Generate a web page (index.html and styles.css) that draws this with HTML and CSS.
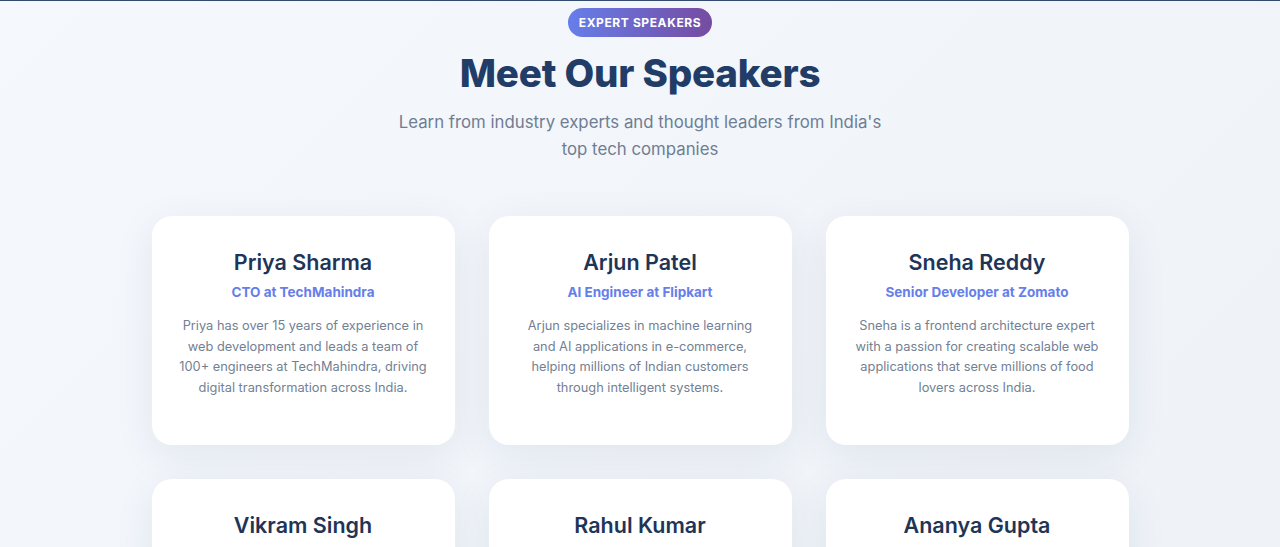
FILE: index.html
```html
<!DOCTYPE html>
<html lang="en">
<head>
<meta charset="utf-8">
<title>Meet Our Speakers</title>
<link rel="stylesheet" href="styles.css">
</head>
<body>
<section class="speakers">
  <div class="intro">
    <span class="badge">EXPERT SPEAKERS</span>
    <h1 class="title">Meet Our Speakers</h1>
    <p class="subtitle">Learn from industry experts and thought leaders from India's top tech companies</p>
  </div>
  <div class="grid">
    <article class="card">
      <h3 class="name">Priya Sharma</h3>
      <p class="role">CTO at TechMahindra</p>
      <p class="bio">Priya has over 15 years of experience in web development and leads a team of 100+ engineers at TechMahindra, driving digital transformation across India.</p>
    </article>
    <article class="card">
      <h3 class="name">Arjun Patel</h3>
      <p class="role">AI Engineer at Flipkart</p>
      <p class="bio">Arjun specializes in machine learning and AI applications in e-commerce, helping millions of Indian customers through intelligent systems.</p>
    </article>
    <article class="card">
      <h3 class="name">Sneha Reddy</h3>
      <p class="role">Senior Developer at Zomato</p>
      <p class="bio">Sneha is a frontend architecture expert with a passion for creating scalable web applications that serve millions of food lovers across India.</p>
    </article>
    <article class="card">
      <h3 class="name">Vikram Singh</h3>
      <p class="role">Cloud Architect at Infosys</p>
      <p class="bio">Vikram designs cloud infrastructure for enterprise clients across India.</p>
    </article>
    <article class="card">
      <h3 class="name">Rahul Kumar</h3>
      <p class="role">DevOps Lead at Paytm</p>
      <p class="bio">Rahul builds reliable deployment pipelines for high-traffic payment systems.</p>
    </article>
    <article class="card">
      <h3 class="name">Ananya Gupta</h3>
      <p class="role">Product Designer at Swiggy</p>
      <p class="bio">Ananya crafts delightful user experiences for millions of users.</p>
    </article>
  </div>
</section>
</body>
</html>
```

FILE: styles.css
```css
html, body {
  margin: 0;
  padding: 0;
}
body {
  font-family: "Inter", "Liberation Sans", sans-serif;
  background: linear-gradient(135deg, #f5f8fd 0%, #eef2f7 100%);
  border-top: 1px solid #34496e;
  min-height: 100vh;
}
.speakers {
  padding: 7px 0 60px;
}
.intro {
  display: flex;
  flex-direction: column;
  align-items: center;
  text-align: center;
}
.badge {
  display: inline-block;
  background: linear-gradient(90deg, #667eea 0%, #764ba2 100%);
  color: #ffffff;
  font-size: 12px;
  font-weight: 700;
  letter-spacing: 0.6px;
  line-height: 29px;
  height: 29px;
  padding: 0 11px;
  border-radius: 15px;
}
.title {
  margin: 12px 0 0;
  font-family: "Inter", "Liberation Sans", sans-serif;
  font-size: 38.5px;
  font-weight: 800;
  line-height: 48px;
  letter-spacing: -0.2px;
  color: #213c66;
}
.subtitle {
  margin: 12px 0 0;
  max-width: 500px;
  font-size: 16.8px;
  line-height: 27px;
  color: #6f7d93;
}
.grid {
  display: grid;
  grid-template-columns: repeat(3, 303px);
  gap: 34px 34px;
  justify-content: center;
  margin-top: 53px;
}
.card {
  background: #ffffff;
  border-radius: 20px;
  padding: 32px 27px 47px;
  text-align: center;
  box-shadow: 0 10px 40px rgba(30, 50, 90, 0.08);
}
.name {
  margin: 0;
  font-family: "Inter", "Liberation Sans", sans-serif;
  font-size: 21.5px;
  font-weight: 600;
  line-height: 28px;
  color: #1e3557;
}
.role {
  margin: 6px 0 0;
  font-size: 13.5px;
  font-weight: 700;
  line-height: 20px;
  color: #667eea;
}
.bio {
  margin: 14px 0 0;
  font-size: 12.8px;
  line-height: 20.5px;
  color: #727f94;
}
```
